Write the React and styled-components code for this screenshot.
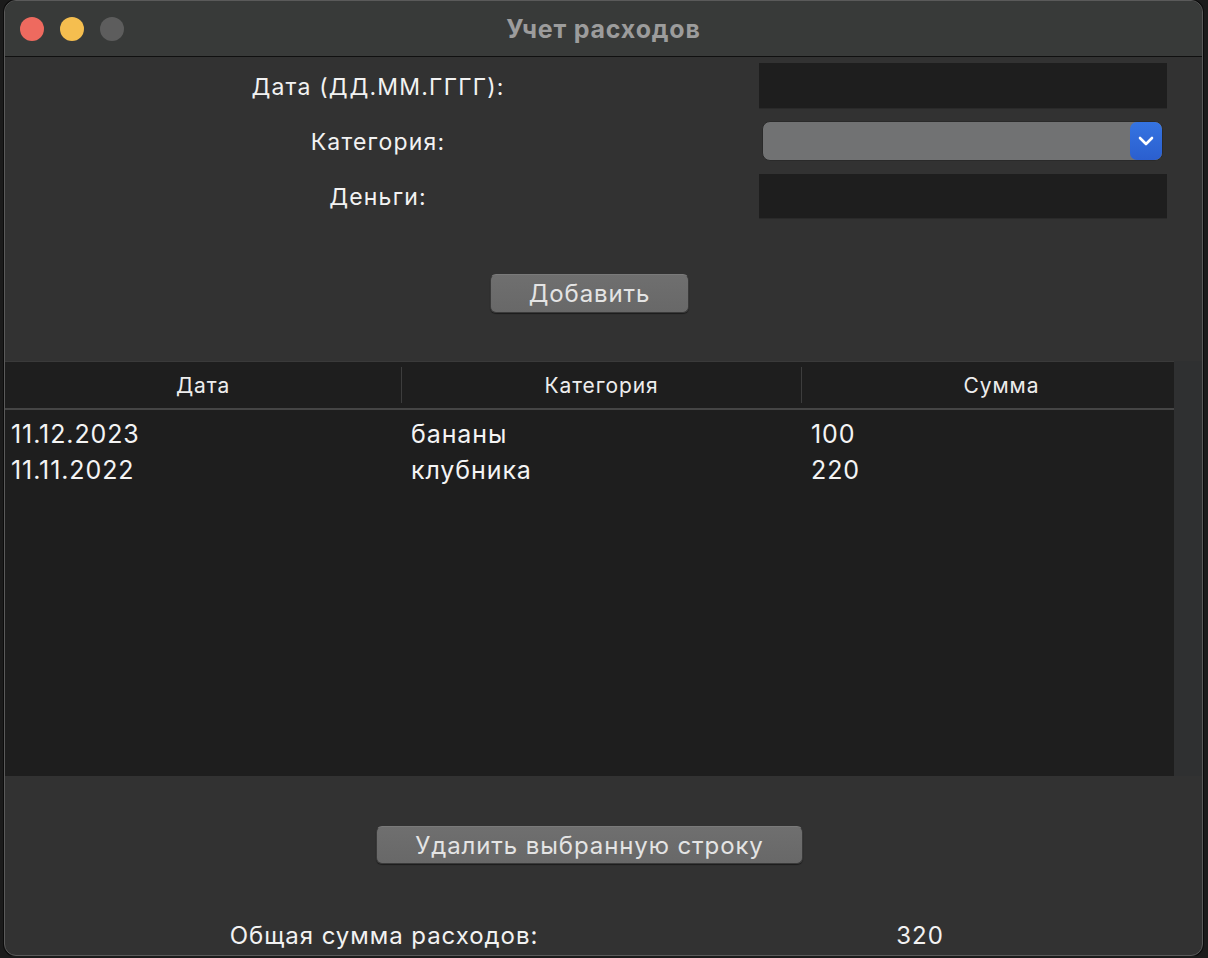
import React from "react";
import styled, { createGlobalStyle } from "styled-components";

const GlobalStyle = createGlobalStyle`
  html, body {
    margin: 0;
    padding: 0;
    background: #1b1b1b;
  }
  body {
    font-family: "Inter", "Liberation Sans", sans-serif;
    -webkit-font-smoothing: antialiased;
  }
`;

const Window = styled.div`
  box-sizing: border-box;
  width: 1199px;
  height: 956px;
  margin: 0 0 0 4px;
  border: 1px solid #5a5a5a;
  border-radius: 12px;
  box-shadow: 0 0 0 1px #0c0c0c;
  background: #323232;
  overflow: hidden;
  display: flex;
  flex-direction: column;
`;

const TitleBar = styled.div`
  flex: 0 0 55px;
  display: flex;
  align-items: center;
  position: relative;
  background: #383a39;
  border-bottom: 1px solid #101010;
`;

const Lights = styled.div`
  display: flex;
  gap: 16px;
  padding-left: 15px;
`;

const Light = styled.span`
  width: 24px;
  height: 24px;
  border-radius: 50%;
  background: ${p => p.$color};
`;

const Title = styled.div`
  position: absolute;
  left: 0;
  right: 0;
  text-align: center;
  font-size: 25px;
  font-weight: 700;
  letter-spacing: 0.8px;
  color: #9c9c9c;
  pointer-events: none;
`;

const Body = styled.div`
  flex: 1;
  display: flex;
  flex-direction: column;
`;

const Form = styled.div`
  display: grid;
  grid-template-columns: 746px 408px;
  grid-template-rows: 45px 44px 44px;
  column-gap: 8px;
  row-gap: 11px;
  padding-top: 6px;
`;

const Label = styled.label`
  justify-self: center;
  align-self: center;
  margin-top: 2px;
  font-size: 23px;
  letter-spacing: 1.2px;
  color: #f2f2f2;
`;

const TextInput = styled.div`
  background: #1e1e1e;
  box-shadow: 0 1px 0 rgba(0, 0, 0, 0.15);
`;

const Select = styled.div`
  margin: 2px 4px 2px 3px;
  display: flex;
  justify-content: flex-end;
  background: #717273;
  border: 1px solid #2a2a2a;
  border-radius: 8px;
  overflow: hidden;
`;

const SelectArrow = styled.div`
  width: 32px;
  display: flex;
  align-items: center;
  justify-content: center;
  background: linear-gradient(#3574e2, #2b5fcf);
  border-radius: 7px;
`;

const ButtonRow = styled.div`
  display: flex;
  justify-content: center;
  padding-right: 28px;
  margin-top: ${p => p.$top}px;
`;

const Button = styled.button`
  box-sizing: border-box;
  width: ${p => p.$width}px;
  height: ${p => p.$height}px;
  background: linear-gradient(#6f6f6f, #686868);
  border: 1px solid #3a3a3a;
  border-top-color: #7a7a7a;
  border-radius: 6px;
  box-shadow: 0 1px 1px rgba(0, 0, 0, 0.45);
  color: #e4e4e4;
  font-family: "Inter", "Liberation Sans", sans-serif;
  font-size: 24px;
  letter-spacing: 0.9px;
  padding: 0;
`;

const TableWrap = styled.div`
  position: relative;
  margin-top: 48px;
  height: 415px;
  background: #1e1e1e;
  overflow: hidden;
  display: flex;
  flex-direction: column;
`;

const HeaderRow = styled.div`
  display: grid;
  grid-template-columns: 396px 400px 400px;
  align-items: center;
  padding: 5px 0;
  border-top: 1px solid #3a3a3a;
  border-bottom: 2px solid #454545;
`;

const HeaderCell = styled.div`
  height: 36px;
  display: flex;
  align-items: center;
  justify-content: center;
  font-size: 21px;
  letter-spacing: 0.9px;
  color: #ededed;
  border-left: ${p => (p.$divider ? "1px solid #3d3d3d" : "none")};
`;

const Rows = styled.div`
  padding-top: 6px;
`;

const Row = styled.div`
  display: grid;
  grid-template-columns: 396px 400px 400px;
  height: 36px;
  align-items: center;
`;

const Cell = styled.div`
  padding-left: ${p => p.$pad}px;
  font-size: 25px;
  letter-spacing: 0.9px;
  color: #f4f4f4;
`;

const Scrollbar = styled.div`
  position: absolute;
  top: 0;
  right: 0;
  bottom: 0;
  width: 28px;
  background: #2f3031;
`;

const Total = styled.div`
  display: grid;
  grid-template-columns: 758px 314px;
  margin-top: 57px;
  font-size: 24px;
  color: #f2f2f2;
  letter-spacing: 0.95px;
`;

const TotalText = styled.div`
  text-align: center;
`;

const expenses = [
  { date: "11.12.2023", category: "бананы", amount: 100 },
  { date: "11.11.2022", category: "клубника", amount: 220 }
];

const Chevron = () => (
  <svg width="16" height="10" viewBox="0 0 16 10" fill="none">
    <path d="M2 2l6 6 6-6" stroke="#fff" strokeWidth="2.6" strokeLinecap="round" strokeLinejoin="round" />
  </svg>
);

const App = () => {
  const total = expenses.reduce((s, e) => s + e.amount, 0);
  return (
    <>
      <GlobalStyle />
      <Window>
        <TitleBar>
          <Lights>
            <Light $color="#ee6a5f" />
            <Light $color="#f5be4f" />
            <Light $color="#5d5d5d" />
          </Lights>
          <Title>Учет расходов</Title>
        </TitleBar>

        <Body>
          <Form>
            <Label>Дата (ДД.ММ.ГГГГ):</Label>
            <TextInput />
            <Label>Категория:</Label>
            <Select>
              <SelectArrow>
                <Chevron />
              </SelectArrow>
            </Select>
            <Label>Деньги:</Label>
            <TextInput />
          </Form>

          <ButtonRow $top={56}>
            <Button $width={199} $height={39}>Добавить</Button>
          </ButtonRow>

          <TableWrap>
            <HeaderRow>
              <HeaderCell>Дата</HeaderCell>
              <HeaderCell $divider>Категория</HeaderCell>
              <HeaderCell $divider>Сумма</HeaderCell>
            </HeaderRow>
            <Rows>
              {expenses.map(e => (
                <Row key={e.date}>
                  <Cell $pad={6}>{e.date}</Cell>
                  <Cell $pad={10}>{e.category}</Cell>
                  <Cell $pad={10}>{e.amount}</Cell>
                </Row>
              ))}
            </Rows>
            <Scrollbar />
          </TableWrap>

          <ButtonRow $top={50}>
            <Button $width={427} $height={38}>Удалить выбранную строку</Button>
          </ButtonRow>

          <Total>
            <TotalText>Общая сумма расходов:</TotalText>
            <TotalText>{total}</TotalText>
          </Total>
        </Body>
      </Window>
    </>
  );
};

export default App;
